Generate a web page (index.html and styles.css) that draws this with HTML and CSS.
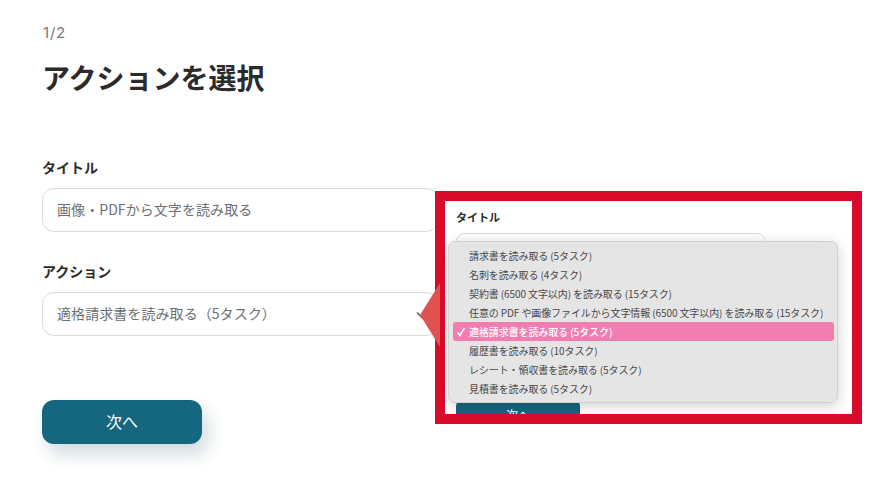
FILE: index.html
```html
<!DOCTYPE html>
<html lang="ja">
<head>
    <meta charset="UTF-8">
    <title>アクションを選択</title>
    <link rel="stylesheet" href="styles.css">
</head>
<body>
    <div class="page">
        <div class="step">1/2</div>
        <h1 class="heading">アクションを選択</h1>

        <label class="label label-title">タイトル</label>
        <div class="field">画像・PDFから文字を読み取る</div>

        <label class="label label-action">アクション</label>
        <div class="field field-select">
            適格請求書を読み取る（5タスク）
            <svg class="chevron" width="12" height="8" viewBox="0 0 12 8"><path d="M1 1.5l5 5 5-5" fill="none" stroke="#666" stroke-width="1.6"/></svg>
        </div>

        <button class="next-btn">次へ</button>
    </div>

    <div class="callout">
        <div class="callout-arrow"></div>
        <div class="callout-box">
            <div class="mini-label">タイトル</div>
            <div class="mini-field"></div>
            <button class="mini-btn">次へ</button>
            <ul class="menu">
                <li>請求書を読み取る (5タスク)</li>
                <li>名刺を読み取る (4タスク)</li>
                <li>契約書 (6500 文字以内) を読み取る (15タスク)</li>
                <li>任意の PDF や画像ファイルから文字情報 (6500 文字以内) を読み取る (15タスク)</li>
                <li class="selected">
                    <svg class="check" width="10" height="10" viewBox="0 0 10 10"><path d="M1.5 5.5l2.4 3L8.5 1" fill="none" stroke="#fff" stroke-width="1.5"/></svg>
                    適格請求書を読み取る (5タスク)
                </li>
                <li>履歴書を読み取る (10タスク)</li>
                <li>レシート・領収書を読み取る (5タスク)</li>
                <li>見積書を読み取る (5タスク)</li>
            </ul>
        </div>
    </div>
</body>
</html>
```

FILE: styles.css
```css
body {
    margin: 0;
    width: 886px;
    height: 478px;
    overflow: hidden;
    background-color: #fff;
    color: #2b2b2b;
    font-family: "Noto Sans CJK JP", "Noto Sans", sans-serif;
    position: relative;
}
.page {
    padding: 23px 0 0 43px;
    width: 400px;
}
.step {
    font-family: "Inter", "Noto Sans CJK JP", sans-serif;
    font-size: 15px;
    line-height: 19px;
    letter-spacing: 0.8px;
    color: #77797c;
}
.heading {
    margin: 16px 0 0 -1px;
    font-size: 28px;
    line-height: 38px;
    font-weight: 700;
}
.label {
    display: block;
    margin-left: -1px;
    font-size: 14px;
    line-height: 20px;
    font-weight: 700;
}
.label-title {
    margin-top: 61px;
    margin-bottom: 11px;
}
.label-action {
    margin-top: 29px;
    margin-bottom: 11px;
}
.field {
    box-sizing: border-box;
    width: 396px;
    height: 44px;
    margin-left: -1px;
    padding: 0 0 3px 14px;
    display: flex;
    align-items: center;
    border: 1.5px solid #d5dce4;
    border-radius: 12px;
    font-size: 14px;
    letter-spacing: 0.07px;
    color: #6c6e71;
    position: relative;
}
.chevron {
    position: absolute;
    right: 9px;
    top: 18px;
}
.next-btn {
    display: block;
    width: 160px;
    height: 44px;
    margin: 64px 0 0 -1px;
    padding: 0 0 2px;
    border: none;
    border-radius: 12px;
    background-color: #15677f;
    color: #fff;
    font-family: inherit;
    font-size: 16px;
    font-weight: 400;
    box-shadow: 6px 10px 18px rgba(21, 80, 100, 0.2);
}
.callout {
    position: absolute;
    left: 435px;
    top: 191px;
}
.callout-box {
    box-sizing: border-box;
    width: 427px;
    height: 233px;
    border: 10px solid #d90b2a;
    background-color: #fff;
    position: relative;
    overflow: hidden;
}
.callout-arrow {
    position: absolute;
    left: -15px;
    top: 92px;
    width: 20px;
    height: 64px;
    z-index: 2;
    background-color: #e05252;
    clip-path: polygon(100% 0, 100% 100%, 0 50%);
}
.mini-label {
    margin: 8px 0 0 11px;
    font-size: 11px;
    line-height: 16px;
    font-weight: 700;
}
.mini-field {
    box-sizing: border-box;
    width: 310px;
    height: 30px;
    margin: 8px 0 0 11px;
    border: 1px solid #d5dce4;
    border-radius: 9px;
}
.mini-btn {
    position: absolute;
    left: 11px;
    top: 201px;
    width: 124px;
    height: 34px;
    padding: 0 0 10px;
    border: none;
    border-radius: 4px;
    background-color: #15677f;
    color: #fff;
    font-family: inherit;
    font-size: 12px;
}
.menu {
    position: absolute;
    left: 3px;
    top: 40px;
    box-sizing: border-box;
    width: 390px;
    height: 162px;
    margin: 0;
    padding: 4px 3px 4px 4px;
    list-style: none;
    background-color: #e6e5e5;
    border: 1px solid #d2d2d2;
    border-radius: 7px;
    box-shadow: 0 3px 14px rgba(0, 0, 0, 0.18);
}
.menu li {
    height: 19px;
    padding-left: 16px;
    display: flex;
    align-items: center;
    font-size: 10px;
    letter-spacing: -0.1px;
    color: #48484a;
    white-space: pre;
    position: relative;
}
.menu .selected {
    background-color: #f27eb1;
    border-radius: 3px;
    color: #fff;
    font-weight: 500;
    white-space: nowrap;
}
.check {
    position: absolute;
    left: 3px;
    top: 5px;
}
```
